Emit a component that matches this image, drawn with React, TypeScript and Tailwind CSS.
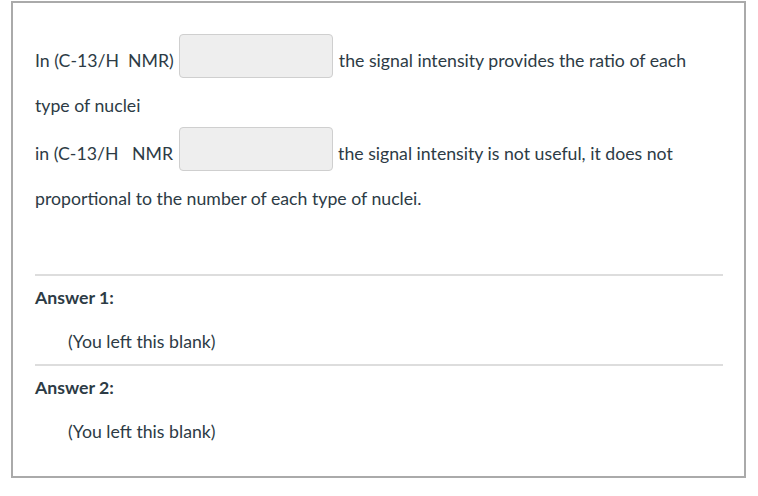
import React from 'react';

const nb = '\u00a0';

const Blank: React.FC = () => (
  <input
    type="text"
    readOnly
    className="inline-block align-top -mt-1 mx-[1px] w-[154px] h-[44px] rounded-[4px] border border-[#cfcfcf] bg-[#eeeeee] outline-none"
  />
);

const App: React.FC = () => {
  const answers = ['Answer 1:', 'Answer 2:'];

  return (
    <div className="min-h-screen bg-white font-['Lato',sans-serif] text-[17.7px] text-[#2d3b45]">
      <div className="ml-[11px] mt-[1px] w-[735px] h-[477px] border-2 border-[#aaaaaa] pt-[35px] pl-[22px] pr-[21px]">
        {/* Question text */}
        <p className="leading-[45px]">
          In (C-13/H{nb} NMR) <Blank /> the signal intensity provides the ratio of each
          <br />
          type of nuclei
        </p>
        <p className="mt-[3px] leading-[45px]">
          in (C-13/H{nb}{nb} NMR <Blank /> the signal intensity is not useful, it does not
          <br />
          proportional to the number of each type of nuclei.
        </p>

        {/* Answers */}
        <div className="mt-[53px]">
          {answers.map((label) => (
            <div key={label} className="border-t-2 border-[#dddddd] pt-[10px] pb-[10px]">
              <div className="font-bold leading-[24px]">{label}</div>
              <div className="mt-[20px] ml-[33px] leading-[24px]">(You left this blank)</div>
            </div>
          ))}
        </div>
      </div>
    </div>
  );
};

export default App;
